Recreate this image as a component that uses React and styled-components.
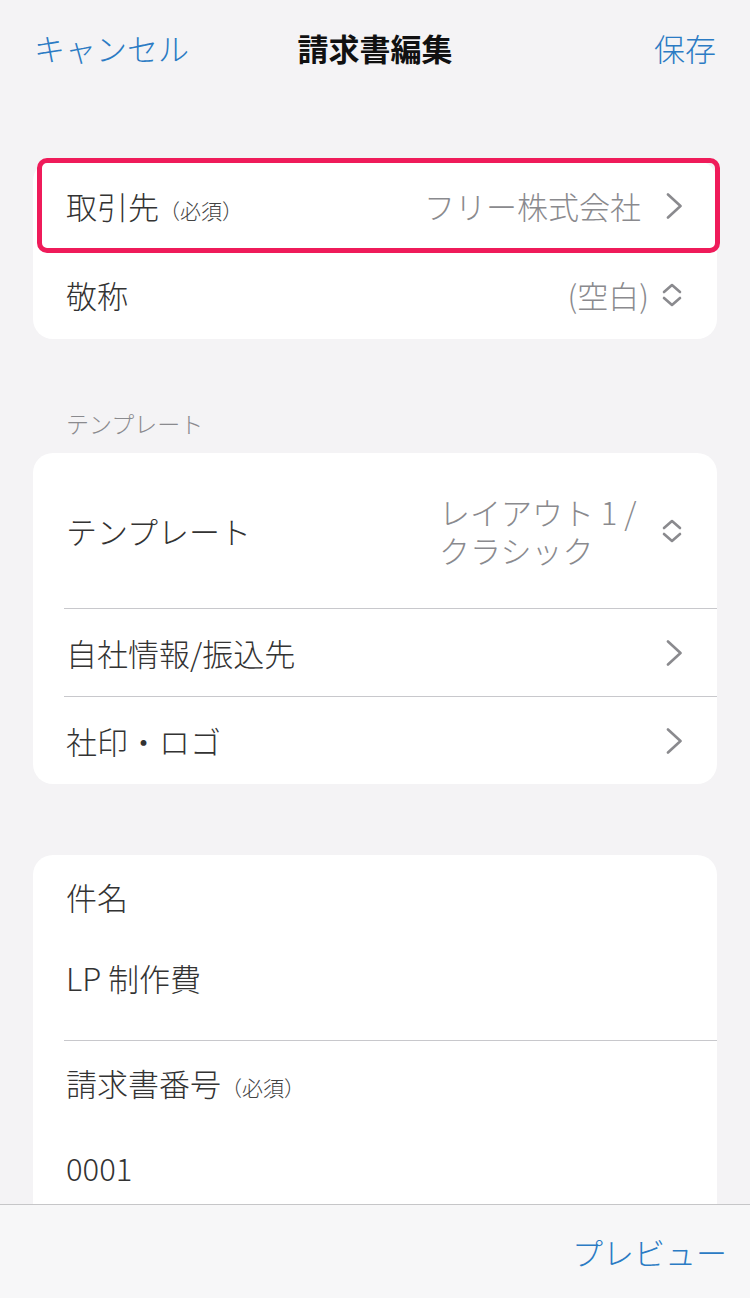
import React from "react";
import styled, { createGlobalStyle } from "styled-components";

const GlobalStyle = createGlobalStyle`
  html, body { margin: 0; padding: 0; height: 100%; }
  body {
    background: #f4f3f5;
    font-family: "Noto Sans CJK JP", "Noto Sans", sans-serif;
    -webkit-font-smoothing: antialiased;
  }
  #root { height: 100%; }
`;

const Screen = styled.div`
  height: 100vh;
  display: flex;
  flex-direction: column;
  background: #f4f3f5;
  overflow: hidden;
`;

const Scroll = styled.div`
  flex: 1;
  min-height: 0;
  overflow: hidden;
`;

const NavBar = styled.header`
  height: 94px;
  display: grid;
  grid-template-columns: 1fr auto 1fr;
  align-items: center;
  padding: 0 34px;
`;

const NavButton = styled.span`
  font-size: 31px;
  font-weight: 300;
  color: #2b7bc4;
  line-height: 1;
  justify-self: ${(p) => (p.$right ? "end" : "start")};
`;

const NavTitle = styled.h1`
  margin: 0;
  font-size: 31px;
  font-weight: 700;
  color: #111;
  line-height: 1;
`;

const Card = styled.section`
  position: relative;
  margin: ${(p) => p.$top}px 33px 0;
  background: #fff;
  border-radius: 20px;
`;

const SectionHeader = styled.div`
  margin: 68px 0 0 66px;
  height: 32px;
  display: flex;
  align-items: center;
  font-size: 23px;
  font-weight: 300;
  color: #8a8a8e;
`;

const Row = styled.div`
  height: ${(p) => p.$h}px;
  display: flex;
  align-items: center;
  padding: 0 34px 0 33px;
  box-sizing: border-box;
  border-top: ${(p) => (p.$sep ? "1px solid #c8c8cc" : "none")};
  margin-left: ${(p) => (p.$sep ? "31px" : "0")};
  padding-left: ${(p) => (p.$sep ? "2px" : "33px")};
`;

const Label = styled.span`
  flex: 1;
  font-size: 31px;
  font-weight: 300;
  color: #333;
  white-space: nowrap;
`;

const Small = styled.span`
  font-size: 21px;
  color: #444;
`;

const Value = styled.span`
  font-size: 31px;
  font-weight: 300;
  color: #8a8a8e;
  line-height: 38px;
  max-width: ${(p) => (p.$wrap ? "210px" : "none")};
  margin-right: ${(p) => (p.$gap ? p.$gap : 24)}px;
  white-space: ${(p) => (p.$wrap ? "normal" : "nowrap")};
`;

const Icon = styled.svg`
  flex: none;
  display: block;
`;

const Highlight = styled.div`
  position: absolute;
  left: 4px;
  right: -3px;
  top: -3px;
  height: 95px;
  border: 5px solid #ef1b5a;
  border-radius: 10px;
  box-sizing: border-box;
  pointer-events: none;
`;

const Field = styled.div`
  padding: 24px 0 44px 33px;
  border-top: ${(p) => (p.$sep ? "1px solid #c8c8cc" : "none")};
  margin-left: ${(p) => (p.$sep ? "31px" : "0")};
  padding-left: ${(p) => (p.$sep ? "2px" : "33px")};
`;

const FieldLabel = styled.div`
  font-size: 31px;
  font-weight: 300;
  line-height: 36px;
  color: #333;
`;

const FieldValue = styled.div`
  margin-top: 45px;
  font-size: 31px;
  font-weight: 300;
  line-height: 36px;
  color: #333;
`;

const Toolbar = styled.footer`
  flex: none;
  height: 94px;
  border-top: 1px solid #c6c6c8;
  background: #f7f7f8;
  display: flex;
  align-items: center;
  justify-content: flex-end;
  padding-right: 23px;
  box-sizing: border-box;
`;

const ToolbarButton = styled.span`
  font-size: 31px;
  font-weight: 300;
  color: #2b7bc4;
`;

const Chevron = () => (
  <Icon width="18" height="26" viewBox="0 0 18 26">
    <path d="M3 1.5 L15.5 13 L3 24.5" fill="none" stroke="#8a8a8e" strokeWidth="2.6" strokeLinecap="round" strokeLinejoin="round" />
  </Icon>
);

const UpDown = () => (
  <Icon width="22" height="24" viewBox="0 0 22 24">
    <path d="M3 9 L11 2 L19 9 M3 15 L11 22 L19 15" fill="none" stroke="#8a8a8e" strokeWidth="2.6" strokeLinecap="round" strokeLinejoin="round" />
  </Icon>
);

export default function App() {
  return (
    <>
      <GlobalStyle />
      <Screen>
        <Scroll>
          <NavBar>
            <NavButton>キャンセル</NavButton>
            <NavTitle>請求書編集</NavTitle>
            <NavButton $right>保存</NavButton>
          </NavBar>

          <Card $top={67}>
            <Row $h={89}>
              <Label>
                取引先<Small>（必須）</Small>
              </Label>
              <Value>フリー株式会社</Value>
              <Chevron />
            </Row>
            <Row $h={89}>
              <Label>敬称</Label>
              <Value $gap={12}>(空白)</Value>
              <UpDown />
            </Row>
            <Highlight />
          </Card>

          <SectionHeader>テンプレート</SectionHeader>

          <Card $top={14}>
            <Row $h={155}>
              <Label>テンプレート</Label>
              <Value $wrap $gap={12}>レイアウト 1 / クラシック</Value>
              <UpDown />
            </Row>
            <Row $h={88} $sep>
              <Label>自社情報/振込先</Label>
              <Chevron />
            </Row>
            <Row $h={88} $sep>
              <Label>社印・ロゴ</Label>
              <Chevron />
            </Row>
          </Card>

          <Card $top={71}>
            <Field>
              <FieldLabel>件名</FieldLabel>
              <FieldValue>LP 制作費</FieldValue>
            </Field>
            <Field $sep>
              <FieldLabel>
                請求書番号<Small>（必須）</Small>
              </FieldLabel>
              <FieldValue>0001</FieldValue>
            </Field>
          </Card>
        </Scroll>
        <Toolbar>
          <ToolbarButton>プレビュー</ToolbarButton>
        </Toolbar>
      </Screen>
    </>
  );
}
